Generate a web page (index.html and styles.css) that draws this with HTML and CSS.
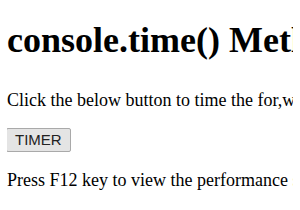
FILE: index.html
```html
<!DOCTYPE html>
<html lang="en">
<head>
    <meta charset="UTF-8">
    <title>console.time() Method</title>
    <link rel="stylesheet" href="styles.css">
</head>
<body>
    <h1 class="title">console.time() Method</h1>
    <p class="intro">Click the below button to time the for,while and do-while loops</p>
    <div class="actions">
        <button class="timer-btn" onclick="timeLoops()">TIMER</button>
    </div>
    <p class="note">Press F12 key to view the performance selection in the console</p>

    <script>
        function timeLoops() {
            console.time('for');
            for (var i = 0; i < 1000; i++) {}
            console.timeEnd('for');
        }
    </script>
</body>
</html>
```

FILE: styles.css
```css
body {
    margin: 0 7px;
    font-family: "Liberation Serif", "Times New Roman", serif;
    background-color: #fff;
    color: #000;
    white-space: nowrap;
    overflow: hidden;
}

.title {
    font-size: 36px;
    line-height: 41px;
    font-weight: bold;
    margin: 20px 0 29px;
}

.intro,
.note {
    font-size: 18px;
    line-height: 21px;
    margin: 0;
}

.actions {
    margin: 17px 0 18px -1px;
}

.timer-btn {
    font-family: "Liberation Sans", Arial, sans-serif;
    font-size: 15px;
    line-height: 16px;
    padding: 3px 8px;
    color: #222;
    background-color: #e4e4e4;
    border: 1px solid #a9a9a9;
    border-radius: 2px;
}
```
